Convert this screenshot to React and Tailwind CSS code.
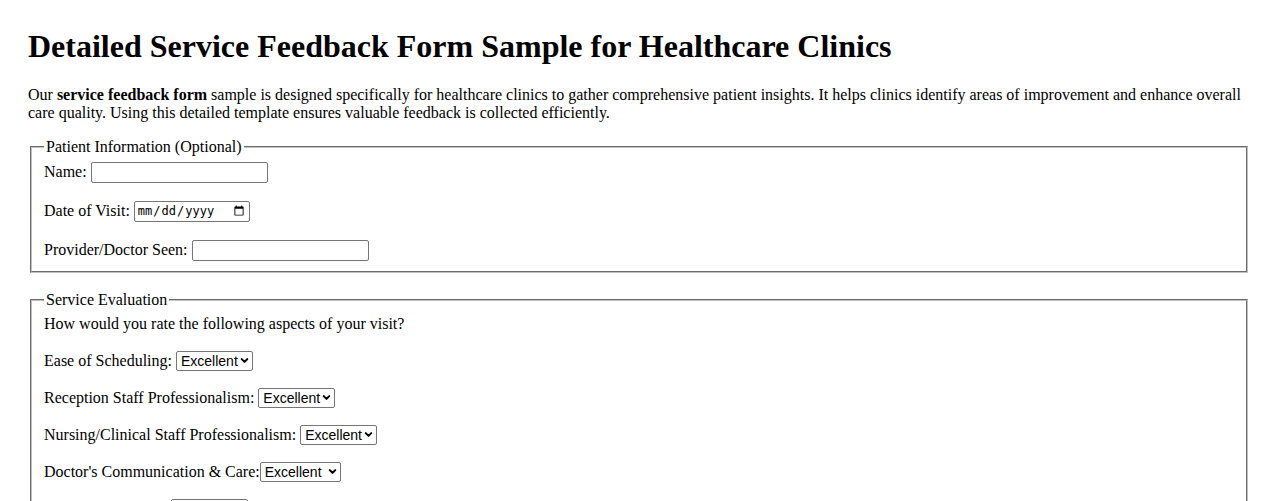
import { ChevronDown } from "lucide-react";

const ratings = ["Excellent", "Good", "Fair", "Poor"];

function TextField({ label, width = "w-[177px]" }) {
  return (
    <div className="flex h-[21px] items-center">
      <label>{label}</label>
      <input
        type="text"
        className={`ml-1 h-[21px] ${width} rounded-[2px] border border-[#767676] bg-white px-[2px] font-['Liberation_Sans'] text-[13.33px]`}
      />
    </div>
  );
}

function RatingField({ label, width = "w-[77px]", gap = "ml-1" }) {
  return (
    <div className="flex h-[20px] items-center">
      <label>{label}</label>
      <div className={`relative ${gap} h-[20px] ${width}`}>
        <select className="h-full w-full appearance-none rounded-[2px] border border-[#767676] bg-white pl-[4px] font-['Liberation_Sans',Arial,sans-serif] text-[14px] leading-[18px] text-black">
          {ratings.map((r) => (
            <option key={r}>{r}</option>
          ))}
        </select>
        <ChevronDown
          className="pointer-events-none absolute right-[3px] top-[4px] h-[11px] w-[11px]"
          strokeWidth={4.5}
        />
      </div>
    </div>
  );
}

export default function App() {
  return (
    <div className="min-h-screen bg-white px-[28px] pt-[28px] font-['Liberation_Serif','Times_New_Roman',serif] text-base leading-[normal] text-black">
      <h1 className="mb-[21.44px] text-[32px] font-bold leading-[normal]">
        Detailed Service Feedback Form Sample for Healthcare Clinics
      </h1>
      <p className="mb-4">
        Our <strong>service feedback form</strong> sample is designed
        specifically for healthcare clinics to gather comprehensive patient
        insights. It helps clinics identify areas of improvement and enhance
        overall care quality. Using this detailed template ensures valuable
        feedback is collected efficiently.
      </p>

      <form>
        <fieldset className="mx-[2px] mb-[18.5px] border-2 border-[#c0c0c0] px-3 pb-[10px] pt-[5.4px] [border-style:groove]">
          <legend className="px-[2px]">Patient Information (Optional)</legend>
          <div className="flex flex-col gap-[18px]">
            <TextField label="Name:" />
            <div className="flex h-[21px] items-center">
              <label>Date of Visit:</label>
              <input
                type="date"
                className="ml-1 h-[21px] w-[116px] rounded-[2px] border border-[#767676] bg-white px-[2px] font-['DejaVu_Sans_Mono',monospace] text-[12px]"
              />
            </div>
            <TextField label="Provider/Doctor Seen:" />
          </div>
        </fieldset>

        <fieldset className="mx-[2px] mb-[18.5px] border-2 border-[#c0c0c0] px-3 pb-[10px] pt-[5.5px] [border-style:groove]">
          <legend className="px-[2px]">Service Evaluation</legend>
          <p className="mb-[18px]">
            How would you rate the following aspects of your visit?
          </p>
          <div className="flex flex-col gap-[17px]">
            <RatingField label="Ease of Scheduling:" />
            <RatingField label="Reception Staff Professionalism:" />
            <RatingField label="Nursing/Clinical Staff Professionalism:" />
            <RatingField
              label="Doctor's Communication & Care:"
              width="w-[81px]"
              gap="ml-0"
            />
            <RatingField label="Overall Wait Time:" />
            <RatingField label="Cleanliness of Facility:" />
          </div>
        </fieldset>
      </form>
    </div>
  );
}
